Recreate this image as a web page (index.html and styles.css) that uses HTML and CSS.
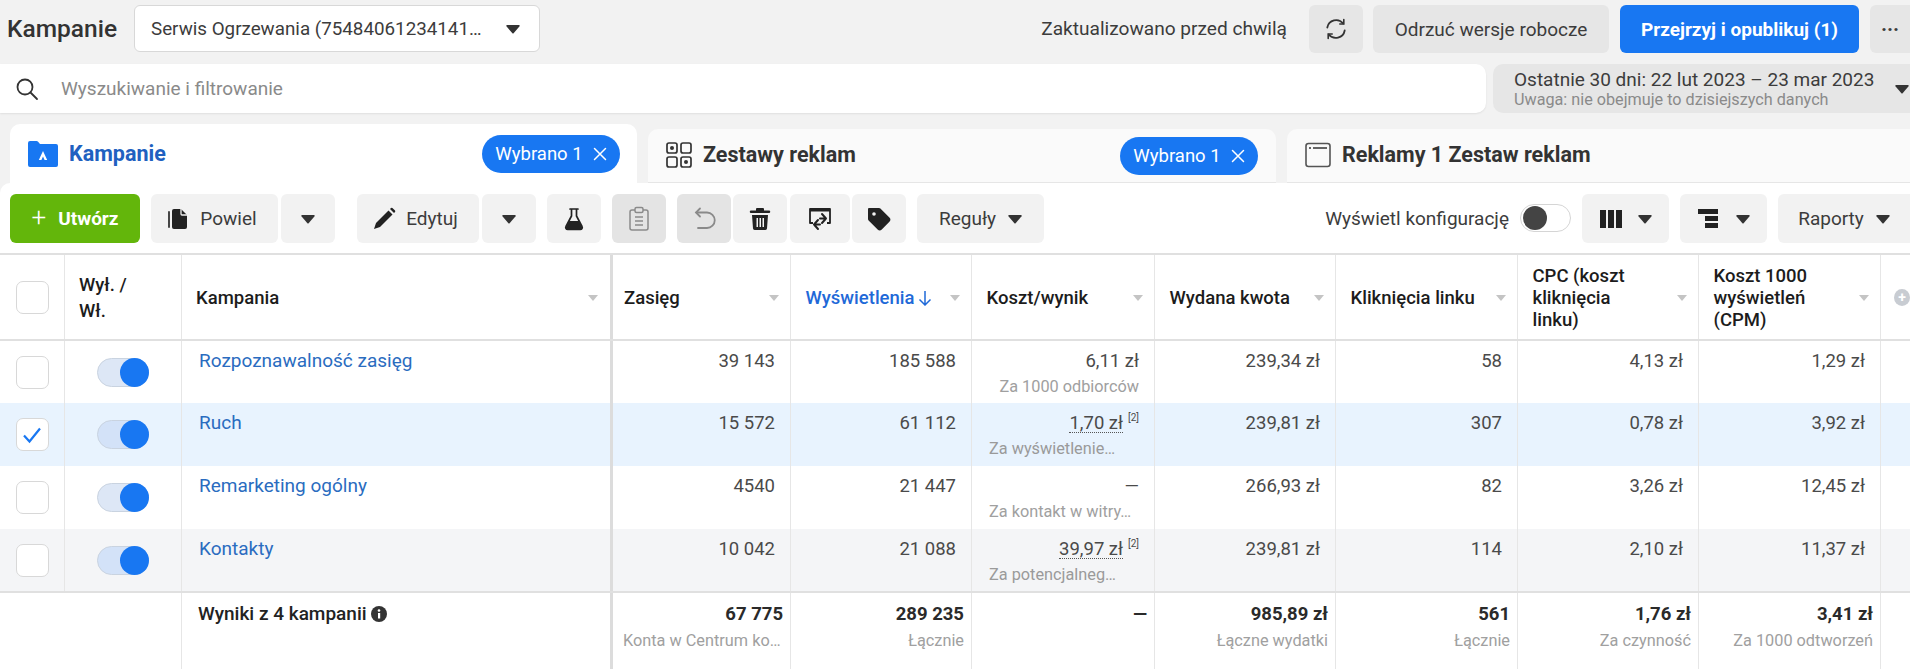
FILE: index.html
```html
<!DOCTYPE html>
<html lang="pl">
<head>
<meta charset="utf-8">
<title>Kampanie</title>
<link rel="stylesheet" href="styles.css">
</head>
<body>
<svg class="defs" width="0" height="0" aria-hidden="true"><defs>
<symbol id="caret" viewBox="0 0 14 10"><path d="M1 1h12a.8.8 0 0 1 .6 1.300L7.600 9.200a.8.8 0 0 1-1.200 0L.4 2.300A.8.8 0 0 1 1 1z" fill="currentColor"/></symbol>
<symbol id="cross" viewBox="0 0 14 14"><path d="M1.500 1.500l11 11M12.500 1.500l-11 11" stroke="currentColor" stroke-width="1.500" fill="none" stroke-linecap="round"/></symbol>
</defs></svg>
<div class="page">
  <header class="topbar">
    <h1 class="title">Kampanie</h1>
    <div class="account"><span class="account-name">Serwis Ogrzewania (75484061234141…</span><svg class="caret"><use href="#caret"/></svg></div>
    <div class="spacer"></div>
    <span class="updated">Zaktualizowano przed chwilą</span>
    <button class="tbtn icon-only"><svg width="24" height="24" viewBox="0 0 24 24" fill="none" stroke="#333" stroke-width="1.800" stroke-linecap="round"><path d="M19.200 6.500A9 9 0 0 0 3.300 10.500"/><path d="M4.800 17.500A9 9 0 0 0 20.700 13.500"/><path d="M19.800 2.500v4.500h-4" stroke-width="1.600"/><path d="M4.200 21.500V17h4" stroke-width="1.600"/></svg></button>
    <button class="tbtn discard">Odrzuć wersje robocze</button>
    <button class="tbtn publish">Przejrzyj i opublikuj (1)</button>
    <button class="tbtn more">···</button>
  </header>

  <div class="searchrow">
    <div class="search">
      <svg width="24" height="24" viewBox="0 0 24 24" fill="none" stroke="#333" stroke-width="1.800" stroke-linecap="round"><circle cx="10" cy="10" r="7.500"/><path d="M15.500 15.500l6.500 6.500"/></svg>
      <span>Wyszukiwanie i filtrowanie</span>
    </div>
    <div class="date">
      <div class="date-text"><div class="date-main">Ostatnie 30 dni: 22 lut 2023 – 23 mar 2023</div><div class="date-note">Uwaga: nie obejmuje to dzisiejszych danych</div></div>
      <svg class="caret"><use href="#caret"/></svg>
    </div>
  </div>

  <nav class="tabs">
    <div class="tab active">
      <svg width="30" height="30" viewBox="0 0 30 30"><path d="M0 4a2 2 0 0 1 2-2h6.500a2 2 0 0 1 1.600.8L12 5h16a2 2 0 0 1 2 2v19a2 2 0 0 1-2 2H2a2 2 0 0 1-2-2z" fill="#1877f2"/><path d="M15 12l4.200 9h-2.600l-1.600-3.600L13.400 21h-2.600z" fill="#fff"/></svg>
      <span class="tab-label">Kampanie</span>
      <span class="pill">Wybrano 1 <svg class="x"><use href="#cross"/></svg></span>
    </div>
    <div class="tab">
      <svg width="26" height="26" viewBox="0 0 26 26" fill="none" stroke="#333" stroke-width="1.700"><rect x="1" y="1" width="10" height="10" rx="2"/><rect x="15" y="1" width="10" height="10" rx="2"/><rect x="1" y="15" width="10" height="10" rx="2"/><rect x="15" y="15" width="10" height="10" rx="2"/><circle cx="6" cy="6" r="2" fill="#333" stroke="none"/><circle cx="20" cy="20" r="2" fill="#333" stroke="none"/></svg>
      <span class="tab-label">Zestawy reklam</span>
      <span class="pill">Wybrano 1 <svg class="x"><use href="#cross"/></svg></span>
    </div>
    <div class="tab">
      <svg width="26" height="26" viewBox="0 0 26 26" fill="none" stroke="#555" stroke-width="1.600"><rect x="1" y="1.500" width="24" height="23" rx="2.500"/><path d="M4 6h2M8 6h14" stroke="#333"/></svg>
      <span class="tab-label">Reklamy 1 Zestaw reklam</span>
    </div>
  </nav>

  <section class="toolbar">
    <button class="btn create"><span class="plus">+</span>Utwórz</button>
    <button class="btn w-powiel joined-l"><svg width="24" height="24" viewBox="0 0 24 24"><path d="M3 5v15" stroke="#333" stroke-width="1.800" fill="none" stroke-linecap="round"/><path d="M8 2h7l6 6v12a2 2 0 0 1-2 2H8a2 2 0 0 1-2-2V4a2 2 0 0 1 2-2z" fill="#222"/><path d="M15 2v5a1 1 0 0 0 1 1h5" stroke="#f2f2f2" stroke-width="1.300" fill="none"/></svg>Powiel</button>
    <button class="btn w-caret sep-big"><svg class="caret"><use href="#caret"/></svg></button>
    <button class="btn w-edytuj joined-l"><svg width="24" height="24" viewBox="0 0 24 24" fill="#222"><path d="M16.500 3.500l4 4L8 20l-6 2 2-6z"/><path d="M18 2l1-1a1 1 0 0 1 1.400 0l2.600 2.600a1 1 0 0 1 0 1.400l-1 1z"/></svg>Edytuj</button>
    <button class="btn w-caret sep-small"><svg class="caret"><use href="#caret"/></svg></button>
    <button class="btn w-icon"><svg width="22" height="24" viewBox="0 0 22 24"><path d="M7 2h8M8.500 2v7L3 19.500A2 2 0 0 0 4.800 22.500h12.400A2 2 0 0 0 19 19.500L13.500 9V2" fill="none" stroke="#222" stroke-width="1.700" stroke-linecap="round"/><path d="M6.200 14h9.600l3 6a1.500 1.500 0 0 1-1.400 2.400H4.600A1.500 1.500 0 0 1 3.200 20z" fill="#222"/></svg></button>
    <button class="btn w-icon dim"><svg width="22" height="26" viewBox="0 0 22 26" fill="none" stroke="#8a8a8a" stroke-width="1.500"><rect x="2" y="4" width="18" height="20" rx="2"/><rect x="7" y="1.500" width="8" height="5" rx="1.500" fill="#e4e4e4"/><path d="M7 11h8M7 15h8M7 19h8"/></svg></button>
    <button class="btn w-icon dim joined-l"><svg width="26" height="26" viewBox="0 0 26 26" fill="none" stroke="#8a8a8a" stroke-width="1.800" stroke-linecap="round"><path d="M9 2.500L5 6.500l4 4"/><path d="M5.500 6.500H16a6.500 6.500 0 0 1 0 15.500H7"/></svg></button>
    <button class="btn w-icon joined-r"><svg width="22" height="24" viewBox="0 0 22 24" fill="#222"><path d="M8 1h6a1 1 0 0 1 1 1v1.500h5a1 1 0 0 1 0 2.500H2a1 1 0 0 1 0-2.500h5V2a1 1 0 0 1 1-1z"/><path d="M3 8h16l-1 13.500a2 2 0 0 1-2 1.500H6a2 2 0 0 1-2-1.500zM7.500 11v9h1.500v-9zm3 0v9H12v-9zm3 0v9H15v-9z" fill-rule="evenodd"/></svg></button>
    <button class="btn w-move joined-r"><svg width="26" height="26" viewBox="0 0 26 26" fill="none" stroke="#222" stroke-width="2" stroke-linecap="round" stroke-linejoin="round"><path d="M6 17H3V3h20v14h-3" stroke-width="1.800" stroke-linecap="butt"/><path d="M3 4h20" stroke-width="3" stroke-linecap="butt"/><path d="M11 14l-4 4.500 4 4.500M7 18.500h6"/><path d="M15 8l4 4.500-4 4.500M19 12.500h-6"/></svg></button>
    <button class="btn w-icon joined-r"><svg width="26" height="26" viewBox="0 0 26 26"><path d="M3 2h10a2 2 0 0 1 1.400.6l9 9a3 3 0 0 1 0 4.200l-7.600 7.600a3 3 0 0 1-4.200 0l-9-9A2 2 0 0 1 2 13V3a1 1 0 0 1 1-1z" fill="#222"/><circle cx="8" cy="8" r="1.800" fill="#f2f2f2"/></svg></button>
    <button class="btn w-rules">Reguły<svg class="caret"><use href="#caret"/></svg></button>
    <div class="spacer"></div>
    <span class="config">Wyświetl konfigurację</span>
    <span class="sw-off"><span class="sw-off-dot"></span></span>
    <button class="btn w-col"><svg width="22" height="20" viewBox="0 0 22 20" fill="#222"><rect x="0" y="1" width="6" height="18"/><rect x="8" y="1" width="6" height="18"/><rect x="16" y="1" width="6" height="18"/></svg><svg class="caret"><use href="#caret"/></svg></button>
    <button class="btn w-col"><svg width="22" height="22" viewBox="0 0 22 22" fill="#222"><rect x="0" y="1" width="20" height="5"/><rect x="7" y="8" width="13" height="5"/><rect x="7" y="15" width="13" height="5"/></svg><svg class="caret"><use href="#caret"/></svg></button>
    <button class="btn w-rep">Raporty<svg class="caret"><use href="#caret"/></svg></button>
  </section>

  <section class="grid">
    <div class="row head">
      <div class="c c-check"><span class="cb"></span></div>
      <div class="c c-sw hd"><span>Wył. /<br>Wł.</span></div>
      <div class="c c-name hd"><span>Kampania</span><i class="tri"></i></div>
      <div class="c c-n frozen hd"><span>Zasięg</span><i class="tri"></i></div>
      <div class="c c-n hd blue"><span class="sort-label">Wyświetlenia<svg width="14" height="16" viewBox="0 0 14 16" fill="none" stroke="#1f69d8" stroke-width="1.500"><path d="M7 1v14M1.500 9.500L7 15l5.500-5.500"/></svg></span><i class="tri"></i></div>
      <div class="c c-n hd"><span>Koszt/wynik</span><i class="tri"></i></div>
      <div class="c c-n hd"><span>Wydana kwota</span><i class="tri"></i></div>
      <div class="c c-n hd"><span>Kliknięcia linku</span><i class="tri"></i></div>
      <div class="c c-n hd"><span>CPC (koszt<br>kliknięcia<br>linku)</span><i class="tri"></i></div>
      <div class="c c-n hd"><span>Koszt 1000<br>wyświetleń<br>(CPM)</span><i class="tri"></i></div>
      <div class="c c-add"><span class="addc">+</span></div>
    </div>

    <div class="row body">
      <div class="c c-check"><span class="cb"></span></div>
      <div class="c c-sw"><span class="sw"><span class="sw-dot"></span></span></div>
      <div class="c c-name"><a class="link">Rozpoznawalność zasięg</a></div>
      <div class="c c-n frozen v">39 143</div>
      <div class="c c-n v">185 588</div>
      <div class="c c-n v">6,11 zł<div class="sub">Za 1000 odbiorców</div></div>
      <div class="c c-n v">239,34 zł</div>
      <div class="c c-n v">58</div>
      <div class="c c-n v">4,13 zł</div>
      <div class="c c-n v">1,29 zł</div>
      <div class="c c-add"></div>
    </div>

    <div class="row body selected">
      <div class="c c-check"><span class="cb"><svg width="20" height="18" viewBox="0 0 20 18" fill="none" stroke="#1877f2" stroke-width="2.200"><path d="M2 9.500l5.500 6L18 2.500"/></svg></span></div>
      <div class="c c-sw"><span class="sw"><span class="sw-dot"></span></span></div>
      <div class="c c-name"><a class="link">Ruch</a></div>
      <div class="c c-n frozen v">15 572</div>
      <div class="c c-n v">61 112</div>
      <div class="c c-n v"><span class="dot">1,70 zł</span><sup class="fn">[2]</sup><div class="sub left">Za wyświetlenie…</div></div>
      <div class="c c-n v">239,81 zł</div>
      <div class="c c-n v">307</div>
      <div class="c c-n v">0,78 zł</div>
      <div class="c c-n v">3,92 zł</div>
      <div class="c c-add"></div>
    </div>

    <div class="row body">
      <div class="c c-check"><span class="cb"></span></div>
      <div class="c c-sw"><span class="sw"><span class="sw-dot"></span></span></div>
      <div class="c c-name"><a class="link">Remarketing ogólny</a></div>
      <div class="c c-n frozen v">4540</div>
      <div class="c c-n v">21 447</div>
      <div class="c c-n v">—<div class="sub left">Za kontakt w witry…</div></div>
      <div class="c c-n v">266,93 zł</div>
      <div class="c c-n v">82</div>
      <div class="c c-n v">3,26 zł</div>
      <div class="c c-n v">12,45 zł</div>
      <div class="c c-add"></div>
    </div>

    <div class="row body alt">
      <div class="c c-check"><span class="cb"></span></div>
      <div class="c c-sw"><span class="sw"><span class="sw-dot"></span></span></div>
      <div class="c c-name"><a class="link">Kontakty</a></div>
      <div class="c c-n frozen v">10 042</div>
      <div class="c c-n v">21 088</div>
      <div class="c c-n v"><span class="dot">39,97 zł</span><sup class="fn">[2]</sup><div class="sub left">Za potencjalneg…</div></div>
      <div class="c c-n v">239,81 zł</div>
      <div class="c c-n v">114</div>
      <div class="c c-n v">2,10 zł</div>
      <div class="c c-n v">11,37 zł</div>
      <div class="c c-add"></div>
    </div>

    <div class="row total">
      <div class="c c-check"></div>
      <div class="c c-sw"></div>
      <div class="c c-name"><span class="total-name">Wyniki z 4 kampanii <svg width="16" height="16" viewBox="0 0 16 16"><circle cx="8" cy="8" r="8" fill="#333"/><rect x="7" y="7" width="2.200" height="5.500" fill="#fff"/><circle cx="8" cy="4.500" r="1.300" fill="#fff"/></svg></span></div>
      <div class="c c-n frozen t"><b>67 775</b><div class="sub left">Konta w Centrum ko…</div></div>
      <div class="c c-n t"><b>289 235</b><div class="sub">Łącznie</div></div>
      <div class="c c-n t"><b>—</b></div>
      <div class="c c-n t"><b>985,89 zł</b><div class="sub">Łączne wydatki</div></div>
      <div class="c c-n t"><b>561</b><div class="sub">Łącznie</div></div>
      <div class="c c-n t"><b>1,76 zł</b><div class="sub">Za czynność</div></div>
      <div class="c c-n t"><b>3,41 zł</b><div class="sub">Za 1000 odtworzeń</div></div>
      <div class="c c-add"></div>
    </div>
  </section>
</div>
</body>
</html>
```

FILE: styles.css
```css
* { box-sizing: border-box; }
html, body { margin: 0; padding: 0; height: 669px; overflow: hidden; }
body { background: #f2f2f2; font-family: Roboto, "Liberation Sans", sans-serif; color: #3c3c3c; font-size: 19px; }
.defs { position: absolute; }
button { font-family: inherit; border: 0; margin: 0; padding: 0; cursor: pointer; }
.page { width: 1910px; height: 669px; overflow: hidden; }
.spacer { flex: 1; }
.caret { width: 14px; height: 10px; color: #333; flex: none; }

.topbar { height: 64px; padding: 5px 0 0 7px; display: flex; align-items: flex-start; }
.title { margin: 0 19px 0 0; font-size: 24.500px; font-weight: 500; line-height: 48px; color: #333; width: 108px; white-space: nowrap; }
.account { width: 406px; height: 47px; background: #fff; border: 1px solid #d8d8d8; border-radius: 6px; display: flex; align-items: center; padding: 0 19px 0 16px; justify-content: space-between; }
.account-name { font-size: 18.800px; color: #3c3c3c; white-space: nowrap; }
.updated { font-size: 19.100px; line-height: 48px; margin-right: 22px; white-space: nowrap; }
.tbtn { height: 48px; border-radius: 6px; background: #e6e6e6; font-size: 19px; color: #3c3c3c; display: flex; align-items: center; justify-content: center; white-space: nowrap; }
.icon-only { width: 54px; margin-right: 10px; }
.discard { width: 236px; margin-right: 11px; }
.publish { width: 239px; margin-right: 11px; background: #1877f2; color: #fff; font-weight: 700; }
.more { width: 40px; border-radius: 6px 0 0 6px; font-weight: 700; font-size: 20px; }

.searchrow { height: 49px; display: flex; gap: 7px; }
.search { width: 1486px; background: #fff; border-radius: 0 10px 10px 0; box-shadow: 0 1px 2px rgba(0,0,0,.08); display: flex; align-items: center; padding-left: 15px; gap: 22px; font-size: 19px; color: #8a8a8a; }
.date { flex: 1; background: #e6e6e6; border-radius: 10px 0 0 10px; display: flex; align-items: center; padding: 0 0 0 21px; justify-content: space-between; }
.date-main { font-size: 19px; line-height: 22px; color: #3c3c3c; white-space: nowrap; }
.date-note { font-size: 16.200px; line-height: 18px; color: #8a8a8a; white-space: nowrap; }
.date .caret { margin-right: 1px; }

.tabs { height: 70px; padding: 11px 0 0 10px; display: flex; gap: 11px; align-items: flex-start; }
.tab { height: 54px; width: 628px; margin-top: 5px; background: #fafafa; border-bottom: 1px solid #e6e6e6; border-radius: 10px 10px 0 0; display: flex; align-items: flex-start; padding: 13px 18px 0 18px; gap: 11px; flex: none; }
.tab.active { width: 627px; height: 59px; margin-top: 0; background: #fff; border-bottom: 0; padding: 15px 17px 0 18px; }
.tab:last-child { width: 640px; }
.tab-label { font-size: 21.500px; font-weight: 700; color: #333; line-height: 26px; flex: 1; white-space: nowrap; }
.tab.active .tab-label { color: #2060c0; line-height: 30px; }
.pill { background: #1877f2; color: #fff; border-radius: 19px; height: 38px; width: 138px; display: flex; align-items: center; justify-content: center; gap: 10px; font-size: 18.500px; margin-top: -5px; white-space: nowrap; }
.tab.active .pill { margin-top: -4px; }
.x { width: 14px; height: 14px; color: #fff; }

.toolbar { position: relative; height: 71px; background: #fff; border-radius: 10px 0 0 0; padding: 11px 0 0 10px; display: flex; align-items: flex-start; }
.btn { height: 49px; background: #f2f2f2; border-radius: 6px; display: flex; align-items: center; justify-content: center; gap: 10px; font-size: 19px; color: #3c3c3c; flex: none; white-space: nowrap; }
.create { width: 130px; background: #63b60b; color: #fff; font-weight: 700; margin-right: 11px; gap: 12px; }
.plus { font-weight: 300; font-size: 26px; line-height: 26px; margin-top: -3px; }
.joined-l { margin-right: 3px; }
.joined-r { margin-right: 2px; }
.w-powiel { width: 127px; padding-right: 6px; }
.w-caret { width: 54px; }
.sep-big { margin-right: 22px; }
.sep-small { margin-right: 11px; }
.w-edytuj { width: 122px; padding-right: 6px; }
.w-icon { width: 54px; margin-right: 11px; }
.w-icon.joined-l { margin-right: 2px; }
.w-icon.joined-r { margin-right: 3px; }
.dim { background: #e4e4e4; }
.w-move { width: 60px; }
.w-rules { width: 127px; margin-left: 8px; gap: 12px; }
.config { font-size: 19px; line-height: 49px; margin-right: 11px; white-space: nowrap; }
.sw-off { width: 51px; height: 28px; margin: 10px 11px 0 0; border: 1px solid #d5d5d5; border-radius: 14px; display: flex; align-items: center; background: #fff; padding-left: 2px; }
.sw-off-dot { width: 24px; height: 24px; background: #444; border-radius: 50%; }
.w-col { width: 87px; margin-right: 11px; gap: 16px; }
.w-rep { width: 132px; border-radius: 6px 0 0 6px; gap: 12px; }

.grid { background: #fff; height: 417px; border-top: 2px solid #e0e0e0; margin-top: -1px; position: relative; }
.row { display: grid; grid-template-columns: 65px 117px 428px 181px 181px 183px 181px 182px 181px 182px 29px; }
.head { height: 86px; border-bottom: 2px solid #e0e0e0; }
.body { height: 63px; }
.head + .body, .alt { height: 62px; }
.selected { background: #e8f3fe; }
.alt { background: #f4f5f7; }
.total { height: 80px; border-top: 2px solid #e0e0e0; }
.c { border-right: 1px solid #e6e6e6; min-width: 0; position: relative; }
.c:last-child { border-right: 0; }
.total .c-check { border-right: 0; }
.c-name { border-right: 0; }
.frozen { border-left: 3px solid #dcdcdc; }
.c-check { display: flex; align-items: center; justify-content: center; }
.cb { width: 33px; height: 33px; border: 1px solid #d8d8d8; border-radius: 7px; background: #fff; display: flex; align-items: center; justify-content: center; }
.c-sw { display: flex; align-items: center; justify-content: center; }
.sw { width: 52px; height: 29px; border-radius: 15px; background: #dde7f6; border: 1px solid #c9d3e0; position: relative; display: block; }
.selected .sw, .alt .sw { background: #d3e2f8; }
.sw-dot { position: absolute; right: -1px; top: -1px; width: 29px; height: 29px; border-radius: 50%; background: #1877f2; }
.hd { display: flex; align-items: center; justify-content: space-between; font-size: 18.500px; font-weight: 500; line-height: 22px; color: #1c1c1c; padding: 2px 11px 0 14.500px; }
.hd.c-sw { padding-left: 14px; justify-content: flex-start; line-height: 26px; }
.hd.c-name { padding: 2px 12px 0 14px; }
.frozen.hd { padding-left: 11px; }
.blue { color: #1f69d8; }
.sort-label { display: flex; align-items: center; gap: 3px; white-space: nowrap; }
.tri { width: 0; height: 0; border-left: 5px solid transparent; border-right: 5px solid transparent; border-top: 6px solid #c4c4c4; flex: none; margin-left: 6px; }
.link { display: block; padding: 8px 0 0 17px; font-size: 19px; line-height: 24px; color: #2a6cc0; }
.v { text-align: right; padding: 8px 15px 0 17px; font-size: 18.500px; line-height: 24px; color: #4a4a4a; }
.sub { font-size: 16.300px; line-height: 18px; color: #a0a0a0; margin-top: 5px; white-space: nowrap; }
.selected .sub, .alt .sub { color: #9a9a9a; }
.sub.left { text-align: left; }
.dot { border-bottom: 1px dotted #555; line-height: 18px; display: inline-block; }
.fn { font-size: 10px; line-height: 0; vertical-align: 8px; margin-left: 5px; }
.t { text-align: right; padding: 9px 7px 0 10px; font-size: 18.500px; line-height: 24px; color: #222; }
.t .sub { margin-top: 6px; }
.t b { font-weight: 700; color: #2a2a2a; }
.total-name { display: block; padding: 9px 0 0 16px; font-size: 19px; font-weight: 500; line-height: 24px; color: #222; white-space: nowrap; }
.total-name svg { vertical-align: -2px; }
.c-add { display: flex; align-items: center; padding-left: 13px; }
.addc { width: 17px; height: 17px; border-radius: 50%; background: #c8ccd2; color: #fff; font-size: 14px; font-weight: 700; line-height: 17px; text-align: center; display: block; }
```
